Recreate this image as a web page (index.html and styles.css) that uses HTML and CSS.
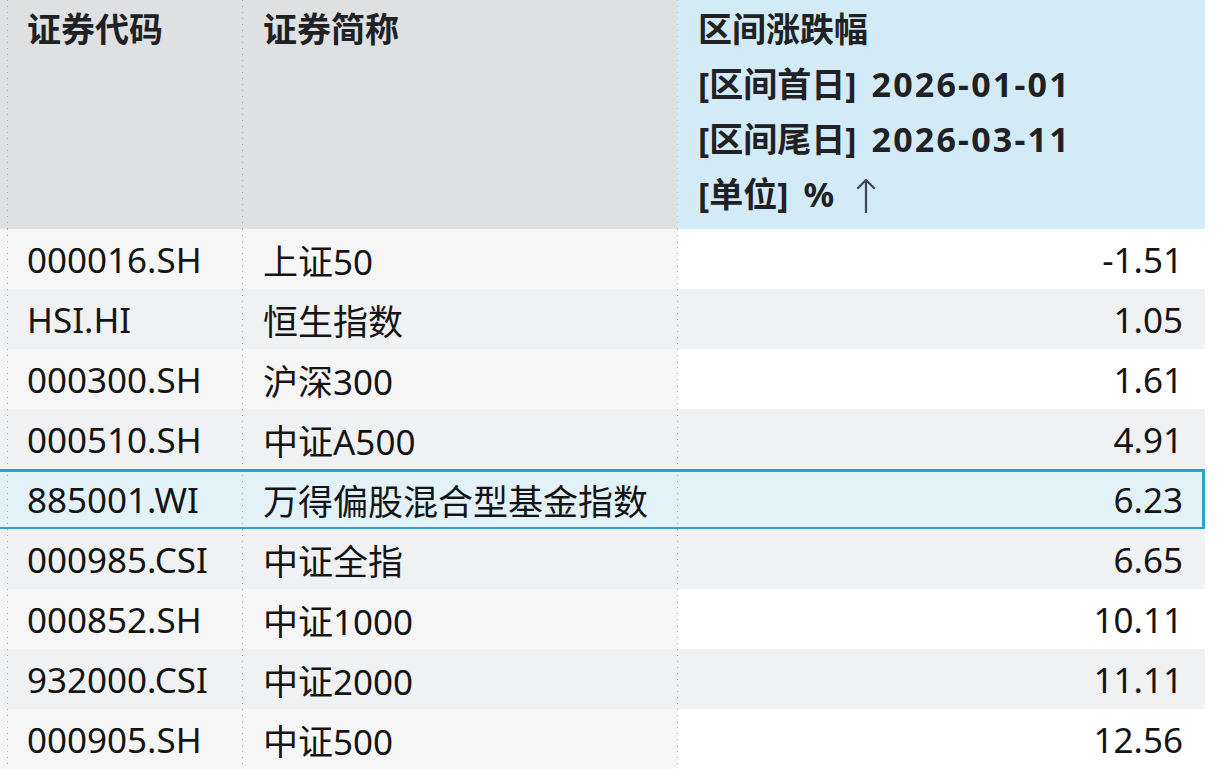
FILE: index.html
```html
<!DOCTYPE html>
<html lang="zh-CN">
<head>
<meta charset="utf-8">
<title>区间涨跌幅</title>
<link rel="stylesheet" href="styles.css">
</head>
<body>
<div class="table">
  <div class="row head">
    <div class="cell c1">证券代码</div>
    <div class="cell c2">证券简称</div>
    <div class="cell c3">
      <div class="hl">区间涨跌幅</div>
      <div class="hl">[区间首日]<span class="val">2026-01-01</span></div>
      <div class="hl">[区间尾日]<span class="val">2026-03-11</span></div>
      <div class="hl">[单位]<span class="val">%</span><svg class="arrow" width="20" height="36" viewBox="0 0 20 36"><path d="M10 3 V35 M2 11 L10 3 L18 11" fill="none" stroke="#3d4454" stroke-width="2.2" stroke-linecap="round" stroke-linejoin="round"/></svg></div>
    </div>
  </div>
  <div class="row odd"><div class="cell c1">000016.SH</div><div class="cell c2">上证50</div><div class="cell c3 num">-1.51</div></div>
  <div class="row even"><div class="cell c1">HSI.HI</div><div class="cell c2">恒生指数</div><div class="cell c3 num">1.05</div></div>
  <div class="row odd"><div class="cell c1">000300.SH</div><div class="cell c2">沪深300</div><div class="cell c3 num">1.61</div></div>
  <div class="row even"><div class="cell c1">000510.SH</div><div class="cell c2">中证A500</div><div class="cell c3 num">4.91</div></div>
  <div class="row selected"><div class="cell c1">885001.WI</div><div class="cell c2">万得偏股混合型基金指数</div><div class="cell c3 num">6.23</div></div>
  <div class="row even"><div class="cell c1">000985.CSI</div><div class="cell c2">中证全指</div><div class="cell c3 num">6.65</div></div>
  <div class="row odd"><div class="cell c1">000852.SH</div><div class="cell c2">中证1000</div><div class="cell c3 num">10.11</div></div>
  <div class="row even"><div class="cell c1">932000.CSI</div><div class="cell c2">中证2000</div><div class="cell c3 num">11.11</div></div>
  <div class="row odd"><div class="cell c1">000905.SH</div><div class="cell c2">中证500</div><div class="cell c3 num">12.56</div></div>
</div>
</body>
</html>
```

FILE: styles.css
```css
html, body {
  margin: 0;
  padding: 0;
  background: #ffffff;
}
body {
  width: 1220px;
  height: 770px;
  overflow: hidden;
  font-family: "Noto Sans", "Noto Sans CJK SC", sans-serif;
  font-size: 35px;
  color: #141414;
}
.table {
  width: 1205px;
  display: flex;
  flex-direction: column;
}
.row {
  display: grid;
  grid-template-columns: 242px 435px 528px;
  height: 60px;
  position: relative;
}
.cell {
  display: flex;
  align-items: center;
  padding-left: 21px;
  white-space: nowrap;
  background-repeat: repeat-y;
  background-size: 1px 6px;
  background-image: linear-gradient(#a9abae 0 1.5px, transparent 1.5px 6px);
  background-position: 0 0;
}
.c1 {
  padding-left: 27px;
  background-position: 7px 0;
}
.num {
  justify-content: flex-end;
  padding-right: 22px;
}
.head {
  height: 229px;
}
.head .cell {
  align-items: flex-start;
  font-size: 34px;
  font-weight: 700;
  color: #202124;
  line-height: 55px;
  padding-top: 2px;
  background-color: #dfe0e2;
}
.head .c3 {
  flex-direction: column;
  background-color: #d3ebf6;
  background-image: linear-gradient(#b4c2c9 0 1.5px, transparent 1.5px 6px);
}
.hl {
  display: flex;
  align-items: center;
  height: 55px;
}
.val {
  margin-left: 15px;
  letter-spacing: 2.2px;
}
.arrow {
  margin-left: 20px;
}
.odd .c1, .odd .c2 {
  background-color: #f6f6f7;
}
.odd .c3 {
  background-color: #ffffff;
}
.even .cell {
  background-color: #f0f1f2;
}
.selected .cell {
  background-color: #e3f2f9;
}
.selected::after {
  content: "";
  position: absolute;
  top: 0;
  bottom: -1px;
  left: -4px;
  right: 0;
  border: 3px solid #2ba5c6;
  pointer-events: none;
}
```
